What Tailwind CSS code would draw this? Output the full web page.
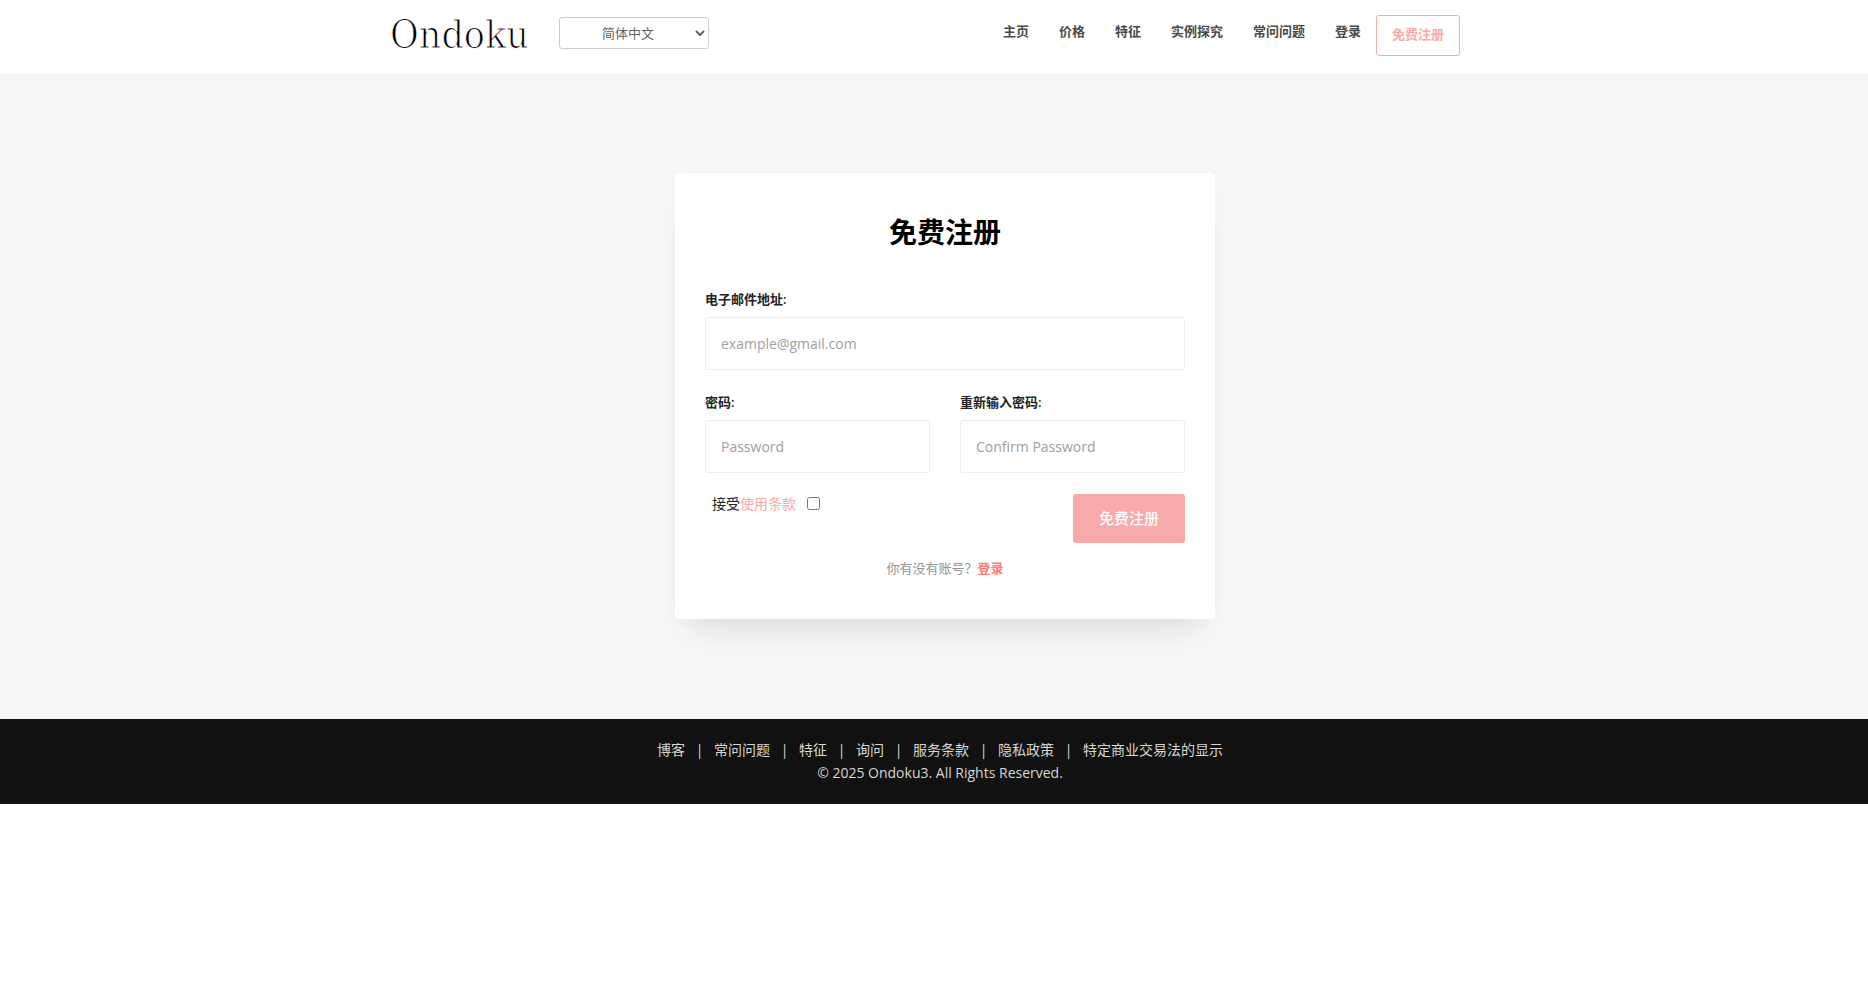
<!DOCTYPE html>
<html lang="zh-CN">
<head>
    <meta charset="UTF-8">
    <meta name="viewport" content="width=device-width, initial-scale=1.0">
    <title>免费注册 - Ondoku</title>
    <script src="https://cdn.jsdelivr.net/npm/@tailwindcss/browser@4"></script>
    <style>
        body {
            font-family: 'Open Sans', 'Noto Sans CJK SC', sans-serif;
        }
        /* white outline thins the strokes of the wordmark */
        .logo {
            -webkit-text-stroke: 1px #fff;
        }
    </style>
</head>
<body class="bg-white text-[#232323]">

    <header class="bg-white">
        <div class="max-w-[1070px] mx-auto lg:-translate-x-[9px] h-[73px] flex items-start justify-between">
            <div class="flex items-start justify-between w-[319px]">
                <a href="#" class="logo pt-2 text-[39px] leading-[54px] text-black font-['DejaVu_Serif_Condensed','Liberation_Serif',serif]">Ondoku</a>
                <select aria-label="语言" class="mt-[17px] w-[150px] h-8 border border-[#ccc] rounded-[3px] bg-white text-[13px] text-center text-[#626262]">
                    <option>简体中文</option>
                    <option>English</option>
                    <option>日本語</option>
                </select>
            </div>
            <nav class="flex items-start pt-[15px] text-[13px] leading-[18px] font-semibold text-[#4a4a4a]">
                <a href="#" class="px-[15px] pt-[7px]">主页</a>
                <a href="#" class="px-[15px] pt-[7px]">价格</a>
                <a href="#" class="px-[15px] pt-[7px]">特征</a>
                <a href="#" class="px-[15px] pt-[7px]">实例探究</a>
                <a href="#" class="px-[15px] pt-[7px]">常问问题</a>
                <a href="#" class="px-[15px] pt-[7px]">登录</a>
                <a href="#" class="px-[15px] pt-[9px] pb-3 border border-[#f8a9a9] rounded-[3px] text-[#f8a9a9]">免费注册</a>
            </nav>
        </div>
    </header>

    <main class="bg-[#f7f7f7] py-[100px] pl-[22px] flex justify-center">
        <form class="w-full max-w-[540px] bg-white rounded-[3px] px-[30px] pt-10 pb-[41px] shadow-[0_25px_30px_-15px_rgba(0,0,0,0.1),0_0_25px_rgba(0,0,0,0.02)]">
            <h1 class="text-[28px] leading-[38px] font-semibold text-black text-center">免费注册</h1>

            <label for="email" class="block mt-[39px] text-[13px] leading-[18px] font-semibold">电子邮件地址:</label>
            <input id="email" type="email" placeholder="example@gmail.com" class="block mt-[9px] w-full h-[53px] px-[15px] border border-[#ededed] rounded-[3px] text-sm placeholder:text-[#a0a0a0]">

            <div class="grid grid-cols-2 gap-[30px] mt-[23px]">
                <div>
                    <label for="password" class="block text-[13px] leading-[18px] font-semibold">密码:</label>
                    <input id="password" type="password" placeholder="Password" class="block mt-[9px] w-full h-[53px] px-[15px] border border-[#ededed] rounded-[3px] text-sm placeholder:text-[#a0a0a0]">
                </div>
                <div>
                    <label for="confirm" class="block text-[13px] leading-[18px] font-semibold">重新输入密码:</label>
                    <input id="confirm" type="password" placeholder="Confirm Password" class="block mt-[9px] w-full h-[53px] px-[15px] border border-[#ededed] rounded-[3px] text-sm placeholder:text-[#a0a0a0]">
                </div>
            </div>

            <div class="flex items-start justify-between mt-[21px]">
                <div class="flex items-center pl-[7px] text-sm">
                    <label for="terms">接受<a href="#" class="text-[#f8a9a9]">使用条款</a></label>
                    <input id="terms" type="checkbox" class="ml-[11px] mb-[2px] size-[13px]">
                </div>
                <button type="button" class="h-[49px] px-[26px] rounded-[3px] bg-[#f8a9a9] text-white text-[15px] font-medium">免费注册</button>
            </div>

            <p class="mt-[15px] text-[13px] leading-5 text-center text-[#939393]">你有没有账号？<a href="#" class="font-semibold text-[#ff7a7a]">登录</a></p>
        </form>
    </main>

    <footer class="bg-[#111] text-[#d6d6d6] text-sm leading-[23px] text-center pt-[19px] pb-5 pl-3">
        <div class="flex justify-center gap-[10px]">
            <a href="#">博客</a>
            <span class="w-[9px]">|</span>
            <a href="#">常问问题</a>
            <span class="w-[9px]">|</span>
            <a href="#">特征</a>
            <span class="w-[9px]">|</span>
            <a href="#">询问</a>
            <span class="w-[9px]">|</span>
            <a href="#">服务条款</a>
            <span class="w-[9px]">|</span>
            <a href="#">隐私政策</a>
            <span class="w-[9px]">|</span>
            <a href="#">特定商业交易法的显示</a>
        </div>
        <p>© 2025 Ondoku3. All Rights Reserved.</p>
    </footer>

</body>
</html>
